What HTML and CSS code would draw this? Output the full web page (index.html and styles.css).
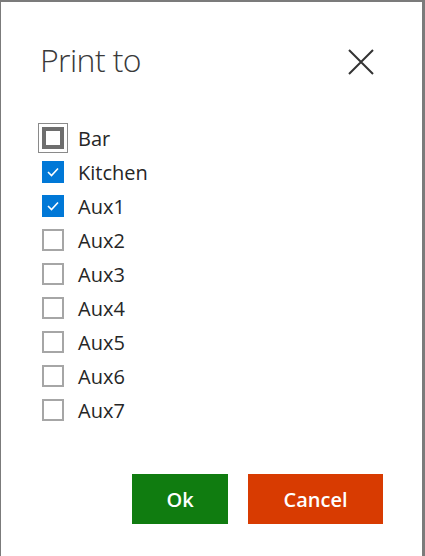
FILE: index.html
```html
<!DOCTYPE html>
<html>

<head>
  <title>Print to</title>
  <link rel="stylesheet" href="styles.css">
</head>

<body>
  <div class="dialog">
    <div class="dialog-header">
      <h1 class="dialog-title">Print to</h1>
      <button class="close-btn" aria-label="Close">
        <svg width="26" height="26" viewBox="0 0 26 26">
          <path d="M1 1 L25 25 M25 1 L1 25" stroke="#333" stroke-width="2" fill="none" />
        </svg>
      </button>
    </div>

    <ul class="printer-list">
      <li class="printer focused">
        <span class="box"></span>
        <span class="label">Bar</span>
      </li>
      <li class="printer checked">
        <span class="box">
          <svg width="12" height="10" viewBox="0 0 12 10">
            <polyline points="1,5 4.5,8.5 11,1.5" stroke="#fff" stroke-width="1.6" fill="none" />
          </svg>
        </span>
        <span class="label">Kitchen</span>
      </li>
      <li class="printer checked">
        <span class="box">
          <svg width="12" height="10" viewBox="0 0 12 10">
            <polyline points="1,5 4.5,8.5 11,1.5" stroke="#fff" stroke-width="1.6" fill="none" />
          </svg>
        </span>
        <span class="label">Aux1</span>
      </li>
      <li class="printer"><span class="box"></span><span class="label">Aux2</span></li>
      <li class="printer"><span class="box"></span><span class="label">Aux3</span></li>
      <li class="printer"><span class="box"></span><span class="label">Aux4</span></li>
      <li class="printer"><span class="box"></span><span class="label">Aux5</span></li>
      <li class="printer"><span class="box"></span><span class="label">Aux6</span></li>
      <li class="printer"><span class="box"></span><span class="label">Aux7</span></li>
    </ul>

    <div class="dialog-footer">
      <button class="btn btn-ok">Ok</button>
      <button class="btn btn-cancel">Cancel</button>
    </div>
  </div>
</body>

</html>
```

FILE: styles.css
```css
/*  reset */
* {
  margin: 0;
  padding: 0;
  box-sizing: border-box;
}

ul,
li {
  list-style: none;
}

body {
  background-color: #7b7b7b;
  font-family: "Open Sans", "Noto Sans", sans-serif;
  color: #262626;
  height: 556px;
  overflow: hidden;
}

.dialog {
  margin: 2px 3px 0 1px;
  height: 560px;
  background-color: #fff;
  padding: 0 39px 0 39px;
}

.dialog-header {
  display: flex;
  justify-content: space-between;
  align-items: center;
  padding-top: 33px;
  height: 82px;
}

.dialog-title {
  font-size: 32px;
  font-weight: 300;
  color: #3a3a3a;
  letter-spacing: -0.6px;
}

.close-btn {
  border: none;
  background: none;
  margin-right: 9px;
  margin-top: 4px;
  width: 26px;
  height: 26px;
  cursor: pointer;
}

.printer-list {
  margin-top: 37px;
}

.printer {
  display: flex;
  align-items: center;
  height: 34px;
  cursor: pointer;
}

.printer .box {
  width: 22px;
  height: 22px;
  margin-left: 2px;
  border: 2px solid #a6a6a6;
  display: flex;
  justify-content: center;
  align-items: center;
}

.printer .label {
  margin-left: 14px;
  font-size: 20px;
}

.printer.checked .box {
  background-color: #0078d7;
  border-color: #0078d7;
}

.printer.focused .box {
  border: 4px solid #6e6e6e;
  outline: 1px solid #8a8a8a;
  outline-offset: 3px;
}

.dialog-footer {
  display: flex;
  justify-content: flex-end;
  gap: 20px;
  margin-top: 47px;
}

.btn {
  border: none;
  height: 50px;
  color: #fff;
  font-family: "Open Sans", "Noto Sans", sans-serif;
  font-size: 20px;
  font-weight: 600;
  cursor: pointer;
}

.btn-ok {
  width: 96px;
  background-color: #107c10;
}

.btn-cancel {
  width: 135px;
  background-color: #d83b01;
}
```
